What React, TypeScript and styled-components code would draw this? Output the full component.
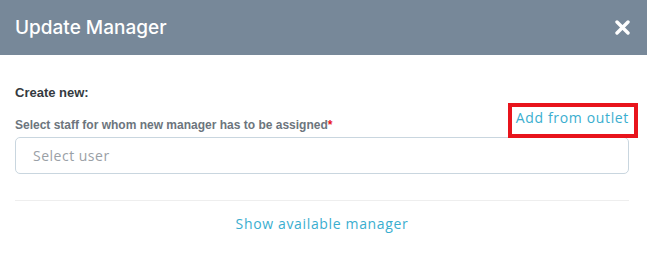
import React from 'react';
import styled, { createGlobalStyle } from 'styled-components';

const GlobalStyle = createGlobalStyle`
	body {
		margin: 0;
		background: #fff;
		font-family: 'Liberation Sans', Arial, sans-serif;
	}
`;

const Modal = styled.div`
	width: 647px;
	height: 263px;
	background: #fff;
`;

const Header = styled.div`
	display: flex;
	align-items: center;
	justify-content: space-between;
	height: 55px;
	padding: 0 17px 0 15px;
	box-sizing: border-box;
	background: #778899;
`;

const Title = styled.h4`
	margin: 0;
	font-family: Inter, 'Noto Sans', sans-serif;
	font-size: 19px;
	font-weight: 500;
	color: #fff;
`;

const Close = styled.button`
	display: flex;
	padding: 0;
	border: 0;
	background: none;
	cursor: pointer;
`;

const Body = styled.div`
	padding: 30px 18px 0 15px;
`;

const Heading = styled.div`
	font-size: 13px;
	font-weight: 700;
	color: #343a40;
	margin-bottom: 15px;
`;

const LabelRow = styled.div`
	display: flex;
	align-items: flex-end;
	justify-content: space-between;
	height: 17px;
	margin-bottom: 5px;
`;

const Label = styled.label`
	font-size: 12px;
	font-weight: 700;
	color: #6c757d;

	& > span {
		color: #e8141c;
	}
`;

const Outlined = styled.div`
	position: relative;
	top: 6px;
	margin-right: -9px;
	padding: 3px 5px 8px 4px;
	border: 4px solid #e8141c;
	line-height: 1;
`;

const Link = styled.a`
	font-family: 'Open Sans', sans-serif;
	font-size: 14px;
	letter-spacing: 0.65px;
	color: #3aaecf;
	text-decoration: none;
	cursor: pointer;
`;

const Select = styled.div`
	display: flex;
	align-items: center;
	height: 37px;
	padding: 0 17px;
	box-sizing: border-box;
	border: 1px solid #c9d6df;
	border-radius: 5px;
	font-family: 'Open Sans', sans-serif;
	font-size: 14px;
	letter-spacing: 0.5px;
	color: #9aa0a6;
`;

const Divider = styled.hr`
	margin: 26px 0 0;
	border: 0;
	border-top: 1px solid #eeeeee;
`;

const Footer = styled.div`
	display: flex;
	justify-content: center;
	padding-top: 13px;
`;

export default function App() {
	return (
		<Modal>
			<GlobalStyle />
			<Header>
				<Title>Update Manager</Title>
				<Close aria-label="Close">
					<svg width="15" height="15" viewBox="0 0 15 15">
						<path d="M2 2L13 13M13 2L2 13" stroke="#fff" strokeWidth="3.4" strokeLinecap="round" />
					</svg>
				</Close>
			</Header>
			<Body>
				<Heading>Create new:</Heading>
				<LabelRow>
					<Label>
						Select staff for whom new manager has to be assigned<span>*</span>
					</Label>
					<Outlined>
						<Link>Add from outlet</Link>
					</Outlined>
				</LabelRow>
				<Select>Select user</Select>
				<Divider />
				<Footer>
					<Link>Show available manager</Link>
				</Footer>
			</Body>
		</Modal>
	);
}
